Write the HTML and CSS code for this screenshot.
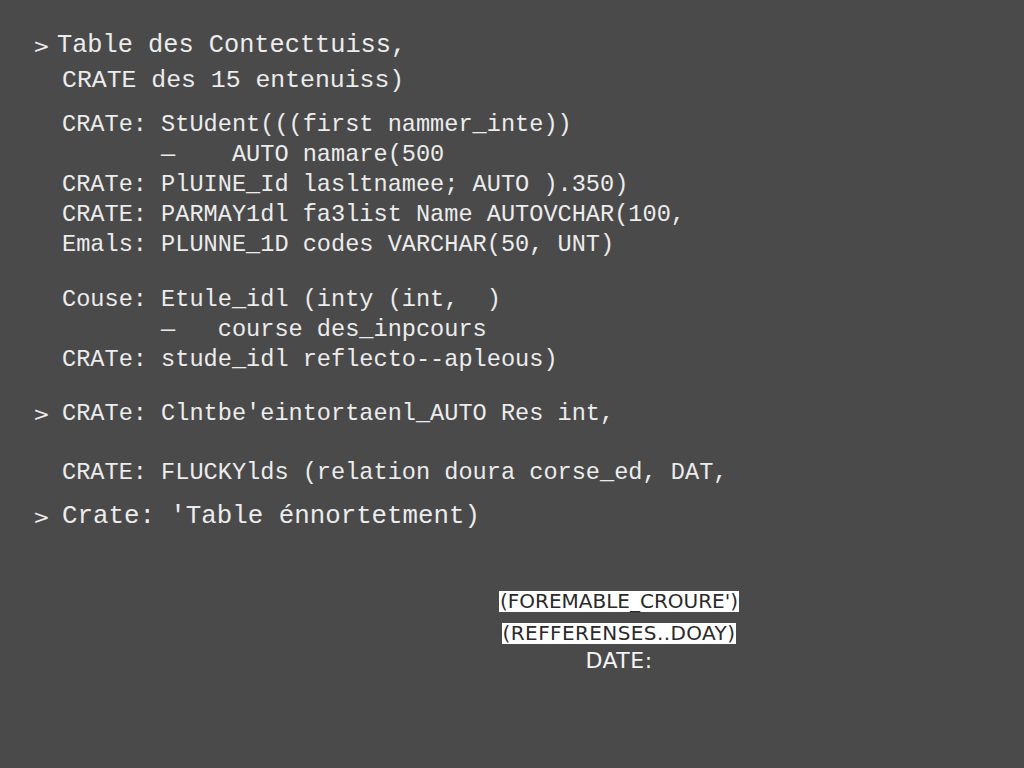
FILE: index.html
```html
<!DOCTYPE html>
<html>
<head>
<meta charset="utf-8">
<link rel="stylesheet" href="styles.css">
</head>
<body>
<div class="screen">
  <div class="code">
    <div class="line big first"><span class="prompt p1">&gt;</span><span>Table des Contecttuiss,</span></div>
    <div class="line big second"><span class="prompt"></span><span>CRATE des 15 entenuiss)</span></div>

    <div class="group g1">
      <div class="line"><span class="prompt"></span><span>CRATe: StUdent(((first nammer_inte))</span></div>
      <div class="line"><span class="prompt"></span><span>       —    AUTO namare(500</span></div>
      <div class="line"><span class="prompt"></span><span>CRATe: PlUINE_Id lasltnamee; AUTO ).350)</span></div>
      <div class="line"><span class="prompt"></span><span>CRATE: PARMAY1dl fa3list Name AUTOVCHAR(100,</span></div>
      <div class="line"><span class="prompt"></span><span>Emals: PLUNNE_1D codes VARCHAR(50, UNT)</span></div>
    </div>

    <div class="group g2">
      <div class="line"><span class="prompt"></span><span>Couse: Etule_idl (inty (int,  )</span></div>
      <div class="line"><span class="prompt"></span><span>       —   course des_inpcours</span></div>
      <div class="line"><span class="prompt"></span><span>CRATe: stude_idl reflecto--apleous)</span></div>
    </div>

    <div class="line g3"><span class="prompt">&gt;</span><span>CRATe: Clntbe'eintortaenl_AUTO Res int,</span></div>
    <div class="line g4"><span class="prompt"></span><span>CRATE: FLUCKYlds (relation doura corse_ed, DAT,</span></div>
    <div class="line g5 large"><span class="prompt">&gt;</span><span>Crate: 'Table énnortetment)</span></div>
  </div>

  <div class="notes">
    <div class="tag t1">(FOREMABLE_CROURE')</div>
    <div class="tag t2">(REFFERENSES..DOAY)</div>
    <div class="date">DATE:</div>
  </div>
</div>
</body>
</html>
```

FILE: styles.css
```css
html, body {
  margin: 0;
  padding: 0;
  background: #4a4a4a;
}
.screen {
  width: 1024px;
  height: 768px;
  box-sizing: border-box;
  padding-top: 31px;
  background: #4a4a4a;
  color: #ececec;
  font-family: "Liberation Mono", "DejaVu Sans Mono", monospace;
}
.code {
  padding-left: 33px;
}
.line {
  display: flex;
  height: 30px;
  line-height: 30px;
  font-size: 23.6px;
  white-space: pre;
}
.prompt {
  width: 29px;
  flex: none;
  font-family: "DejaVu Sans", sans-serif;
  font-size: 20px;
}
.p1 {
  width: 24px;
}
.big {
  font-size: 24.8px;
}
.first {
  font-size: 25.3px;
}
.second {
  margin-top: 4px;
}
.g1 {
  margin-top: 15px;
}
.g2 {
  margin-top: 25px;
}
.g3 {
  margin-top: 24px;
}
.g4 {
  margin-top: 29px;
}
.g5 {
  margin-top: 14px;
}
.large {
  font-size: 25.8px;
}
.notes {
  display: flex;
  flex-direction: column;
  align-items: center;
  padding-left: 214px;
  margin-top: 59px;
}
.tag {
  background: #ffffff;
  color: #2a2a2a;
  font-family: "DejaVu Sans", sans-serif;
  font-size: 20px;
  line-height: 21px;
  height: 21px;
  padding: 0 1px;
  letter-spacing: 0;
  white-space: pre;
}
.t2 {
  margin-top: 11px;
  letter-spacing: 0.4px;
}
.date {
  margin-top: 4px;
  font-family: "DejaVu Sans", sans-serif;
  font-size: 22px;
  line-height: 26px;
  color: #f4f4f4;
  letter-spacing: 0.5px;
}
```
